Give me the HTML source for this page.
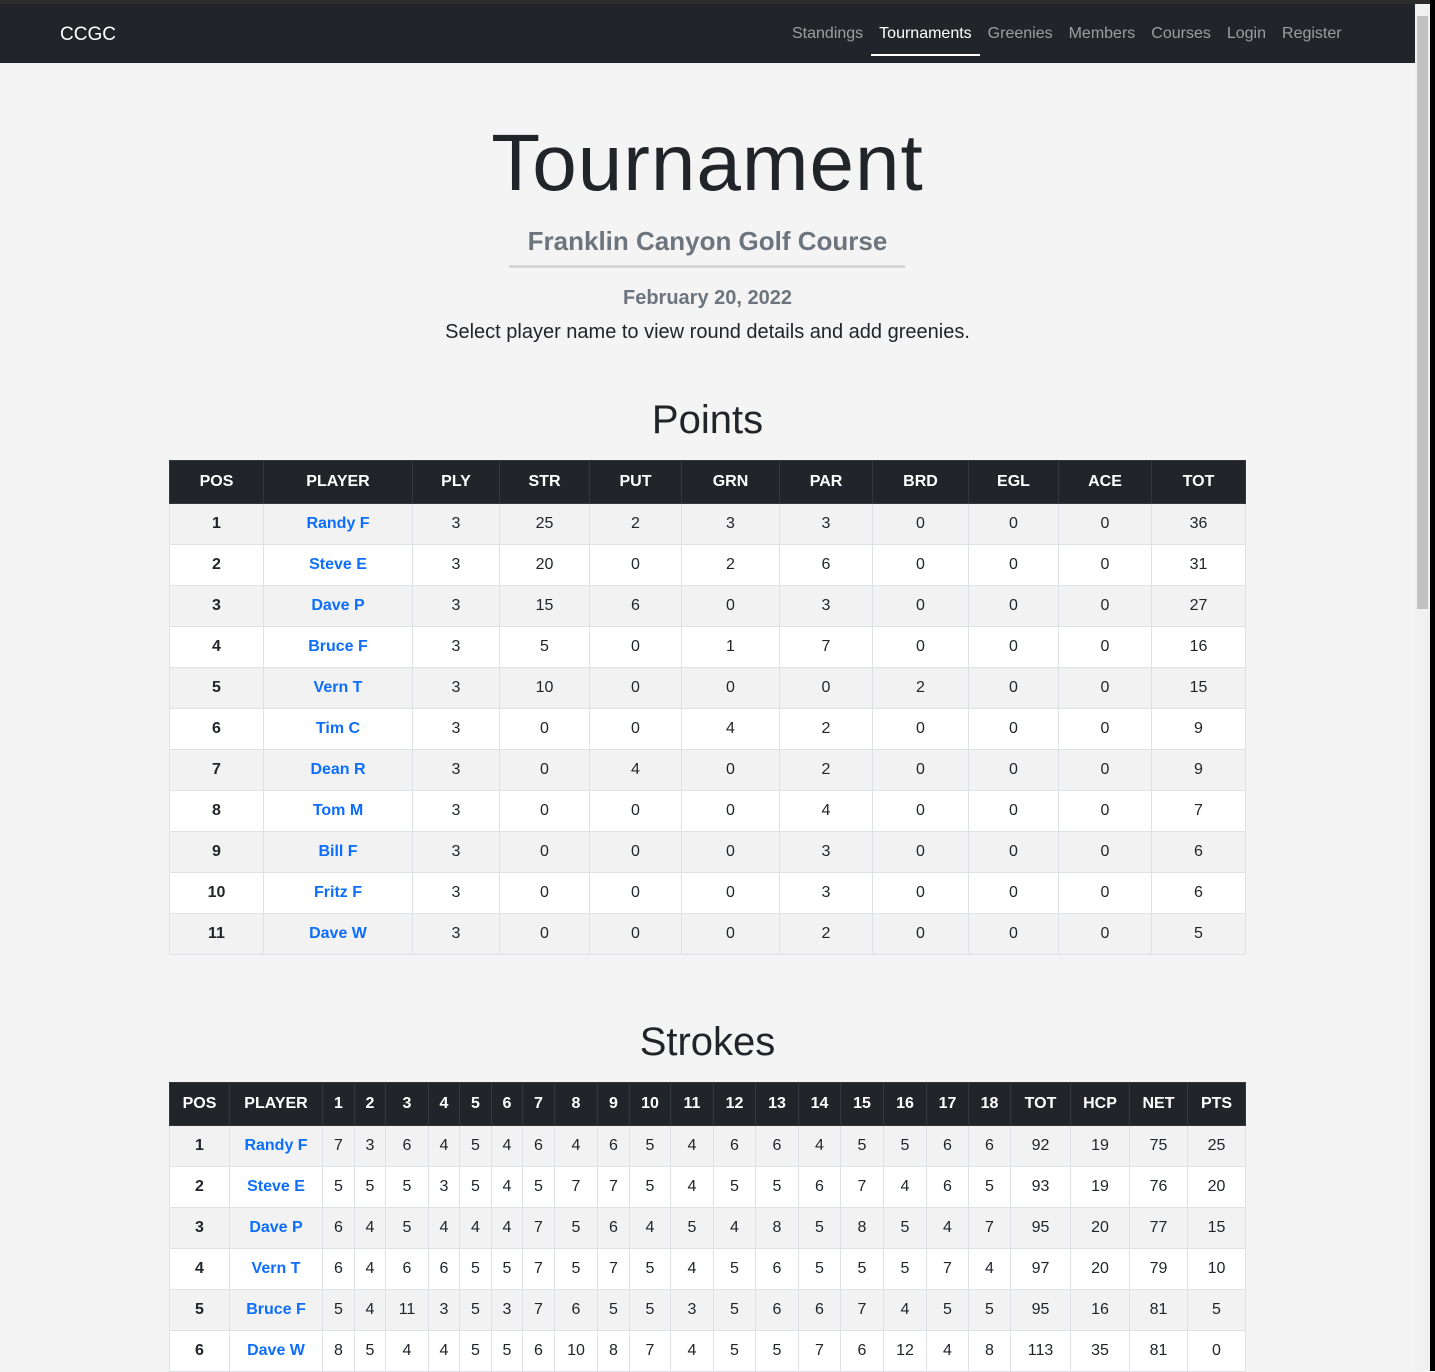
<!DOCTYPE html>
<html><head><meta charset="utf-8"><style>
html,body{margin:0;padding:0;}
body{width:1435px;height:1371px;overflow:hidden;background:#f4f4f4;font-family:"Liberation Sans",sans-serif;color:#212529;position:relative;}
.topstrip{position:absolute;left:0;top:0;width:1435px;height:4px;background:#2c2c2c;}
.nav{position:absolute;left:0;top:4px;width:1415px;height:59px;background:#212529;}
.brand{position:absolute;left:60px;top:20px;color:#fff;font-size:19px;}
.links{position:absolute;top:21px;left:792px;font-size:16px;white-space:nowrap;}
.links span{color:rgba(255,255,255,.55);margin-right:16px;}
.links span.act{color:#fff;position:relative;}
.links span.act:after{content:"";position:absolute;left:-8px;right:-8px;top:29px;height:2px;background:#fff;}
.sb{position:absolute;left:1415px;top:4px;width:15px;height:1367px;background:#f1f1f1;}
.sbt{position:absolute;left:1417px;top:16px;width:11px;height:593px;background:#c1c1c1;}
.sbe{position:absolute;left:1430px;top:0;width:5px;height:1371px;background:#000;}
.c{position:absolute;left:0;width:1415px;text-align:center;}
h1{margin:0;font-size:80px;font-weight:300;color:#212529;letter-spacing:1px;}
.sub{font-size:26px;font-weight:bold;color:#6c757d;}
.line{position:absolute;left:509px;top:265px;width:396px;height:3px;background:#d6d6d6;}
.date{font-size:20px;font-weight:bold;color:#6c757d;}
.sel{font-size:20px;color:#212529;}
h2{margin:0;font-size:40px;font-weight:normal;}
table{position:absolute;left:169px;width:1076px;border-collapse:collapse;table-layout:fixed;font-size:16px;}
th{background:#212529;color:#fff;height:42px;border:1px solid #32383e;font-weight:bold;padding:0;text-align:center;}
td{height:40px;border:1px solid #dee2e6;text-align:center;padding:0;}
tr:nth-child(odd) td{background:#f2f2f2;}
tr:nth-child(even) td{background:#fff;}
td.b{font-weight:bold;}
td.p{font-weight:bold;color:#0d6efd;}
</style></head><body>
<div class="topstrip"></div>
<div class="nav"><div class="brand">CCGC</div>
<div class="links"><span>Standings</span><span class="act">Tournaments</span><span>Greenies</span><span>Members</span><span>Courses</span><span>Login</span><span>Register</span></div></div>
<div class="sb"></div><div class="sbt"></div><div class="sbe"></div>

<div class="c" style="top:117px"><h1>Tournament</h1></div>
<div class="c sub" style="top:226px">Franklin Canyon Golf Course</div>
<div class="line"></div>
<div class="c date" style="top:287px">February 20, 2022</div>
<div class="c sel" style="top:321px">Select player name to view round details and add greenies.</div>
<div class="c" style="top:398px"><h2>Points</h2></div>

<table style="top:460px">
<colgroup><col style="width:94px"><col style="width:149px"><col style="width:87px"><col style="width:90px"><col style="width:92px"><col style="width:98px"><col style="width:93px"><col style="width:96px"><col style="width:90px"><col style="width:93px"><col style="width:94px"></colgroup>
<thead><tr><th>POS</th><th>PLAYER</th><th>PLY</th><th>STR</th><th>PUT</th><th>GRN</th><th>PAR</th><th>BRD</th><th>EGL</th><th>ACE</th><th>TOT</th></tr></thead>
<tbody>
<tr><td class="b">1</td><td class="p">Randy F</td><td>3</td><td>25</td><td>2</td><td>3</td><td>3</td><td>0</td><td>0</td><td>0</td><td>36</td></tr>
<tr><td class="b">2</td><td class="p">Steve E</td><td>3</td><td>20</td><td>0</td><td>2</td><td>6</td><td>0</td><td>0</td><td>0</td><td>31</td></tr>
<tr><td class="b">3</td><td class="p">Dave P</td><td>3</td><td>15</td><td>6</td><td>0</td><td>3</td><td>0</td><td>0</td><td>0</td><td>27</td></tr>
<tr><td class="b">4</td><td class="p">Bruce F</td><td>3</td><td>5</td><td>0</td><td>1</td><td>7</td><td>0</td><td>0</td><td>0</td><td>16</td></tr>
<tr><td class="b">5</td><td class="p">Vern T</td><td>3</td><td>10</td><td>0</td><td>0</td><td>0</td><td>2</td><td>0</td><td>0</td><td>15</td></tr>
<tr><td class="b">6</td><td class="p">Tim C</td><td>3</td><td>0</td><td>0</td><td>4</td><td>2</td><td>0</td><td>0</td><td>0</td><td>9</td></tr>
<tr><td class="b">7</td><td class="p">Dean R</td><td>3</td><td>0</td><td>4</td><td>0</td><td>2</td><td>0</td><td>0</td><td>0</td><td>9</td></tr>
<tr><td class="b">8</td><td class="p">Tom M</td><td>3</td><td>0</td><td>0</td><td>0</td><td>4</td><td>0</td><td>0</td><td>0</td><td>7</td></tr>
<tr><td class="b">9</td><td class="p">Bill F</td><td>3</td><td>0</td><td>0</td><td>0</td><td>3</td><td>0</td><td>0</td><td>0</td><td>6</td></tr>
<tr><td class="b">10</td><td class="p">Fritz F</td><td>3</td><td>0</td><td>0</td><td>0</td><td>3</td><td>0</td><td>0</td><td>0</td><td>6</td></tr>
<tr><td class="b">11</td><td class="p">Dave W</td><td>3</td><td>0</td><td>0</td><td>0</td><td>2</td><td>0</td><td>0</td><td>0</td><td>5</td></tr>
</tbody></table>

<div class="c" style="top:1020px"><h2>Strokes</h2></div>

<table style="top:1082px">
<colgroup><col style="width:60px"><col style="width:93px"><col style="width:32px"><col style="width:31px"><col style="width:43px"><col style="width:31px"><col style="width:32px"><col style="width:31px"><col style="width:32px"><col style="width:43px"><col style="width:32px"><col style="width:41px"><col style="width:43px"><col style="width:42px"><col style="width:43px"><col style="width:42px"><col style="width:43px"><col style="width:43px"><col style="width:42px"><col style="width:42px"><col style="width:60px"><col style="width:59px"><col style="width:58px"><col style="width:58px"></colgroup>
<thead><tr><th>POS</th><th>PLAYER</th><th>1</th><th>2</th><th>3</th><th>4</th><th>5</th><th>6</th><th>7</th><th>8</th><th>9</th><th>10</th><th>11</th><th>12</th><th>13</th><th>14</th><th>15</th><th>16</th><th>17</th><th>18</th><th>TOT</th><th>HCP</th><th>NET</th><th>PTS</th></tr></thead>
<tbody>
<tr><td class="b">1</td><td class="p">Randy F</td><td>7</td><td>3</td><td>6</td><td>4</td><td>5</td><td>4</td><td>6</td><td>4</td><td>6</td><td>5</td><td>4</td><td>6</td><td>6</td><td>4</td><td>5</td><td>5</td><td>6</td><td>6</td><td>92</td><td>19</td><td>75</td><td>25</td></tr>
<tr><td class="b">2</td><td class="p">Steve E</td><td>5</td><td>5</td><td>5</td><td>3</td><td>5</td><td>4</td><td>5</td><td>7</td><td>7</td><td>5</td><td>4</td><td>5</td><td>5</td><td>6</td><td>7</td><td>4</td><td>6</td><td>5</td><td>93</td><td>19</td><td>76</td><td>20</td></tr>
<tr><td class="b">3</td><td class="p">Dave P</td><td>6</td><td>4</td><td>5</td><td>4</td><td>4</td><td>4</td><td>7</td><td>5</td><td>6</td><td>4</td><td>5</td><td>4</td><td>8</td><td>5</td><td>8</td><td>5</td><td>4</td><td>7</td><td>95</td><td>20</td><td>77</td><td>15</td></tr>
<tr><td class="b">4</td><td class="p">Vern T</td><td>6</td><td>4</td><td>6</td><td>6</td><td>5</td><td>5</td><td>7</td><td>5</td><td>7</td><td>5</td><td>4</td><td>5</td><td>6</td><td>5</td><td>5</td><td>5</td><td>7</td><td>4</td><td>97</td><td>20</td><td>79</td><td>10</td></tr>
<tr><td class="b">5</td><td class="p">Bruce F</td><td>5</td><td>4</td><td>11</td><td>3</td><td>5</td><td>3</td><td>7</td><td>6</td><td>5</td><td>5</td><td>3</td><td>5</td><td>6</td><td>6</td><td>7</td><td>4</td><td>5</td><td>5</td><td>95</td><td>16</td><td>81</td><td>5</td></tr>
<tr><td class="b">6</td><td class="p">Dave W</td><td>8</td><td>5</td><td>4</td><td>4</td><td>5</td><td>5</td><td>6</td><td>10</td><td>8</td><td>7</td><td>4</td><td>5</td><td>5</td><td>7</td><td>6</td><td>12</td><td>4</td><td>8</td><td>113</td><td>35</td><td>81</td><td>0</td></tr>
</tbody></table>
</body></html>
